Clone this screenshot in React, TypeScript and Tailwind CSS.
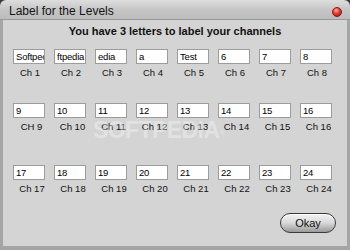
import React from 'react';

const rows: { values: string[]; labels: string[] }[] = [
  {
    values: ['Softpec', 'ftpedia', 'edia', 'a', 'Test', '6', '7', '8'],
    labels: ['Ch 1', 'Ch 2', 'Ch 3', 'Ch 4', 'Ch 5', 'Ch 6', 'Ch 7', 'Ch 8'],
  },
  {
    values: ['9', '10', '11', '12', '13', '14', '15', '16'],
    labels: ['CH 9', 'Ch 10', 'Ch 11', 'Ch 12', 'Ch 13', 'Ch 14', 'Ch 15', 'Ch 16'],
  },
  {
    values: ['17', '18', '19', '20', '21', '22', '23', '24'],
    labels: ['Ch 17', 'Ch 18', 'Ch 19', 'Ch 20', 'Ch 21', 'Ch 22', 'Ch 23', 'Ch 24'],
  },
];

const ChannelRow: React.FC<{ values: string[]; labels: string[]; shift: string }> = ({ values, labels, shift }) => (
  <div className="grid grid-cols-[repeat(8,32px)] gap-x-[9px]">
    {values.map((v, i) => (
      <div key={i} className="flex flex-col">
        <div className="h-[15px] w-[32px] bg-white border border-[#9c9c9c] overflow-hidden whitespace-nowrap pl-[2px] text-[9.5px] leading-[13px] tracking-[-0.2px] text-black">
          {v}
        </div>
        <div className={`mt-[3px] h-[12px] text-center whitespace-nowrap text-[9.5px] leading-[12px] text-[#111] ${shift}`}>
          {labels[i]}
        </div>
      </div>
    ))}
  </div>
);

const App: React.FC = () => {
  return (
    <div className="w-[350px] h-[250px] bg-[#3c3c3c] font-['Liberation_Sans',Arial,sans-serif]">
      <div className="flex flex-col h-full rounded-t-[6px] overflow-hidden">
        {/* title bar */}
        <div className="h-[20px] shrink-0 flex items-center justify-between pl-[9px] pr-[8px] bg-gradient-to-b from-[#dedede] via-[#c6c6c6] to-[#bcbcbc] border-b border-[#9a9a9a]">
          <span className="text-[12px] leading-[14px] text-[#141414] pt-[2px]">Label for the Levels</span>
          <span className="w-[10px] h-[10px] rounded-full border border-[#7a1a1a] bg-[radial-gradient(circle_at_40%_30%,#ffb0a0_0%,#e83a2a_45%,#a01010_100%)] mt-[5px]" />
        </div>

        {/* body */}
        <div className="relative flex-1 flex flex-col bg-[#d4d4d4] border-l-[3px] border-r-[3px] border-b-[4px] border-[#a5a5a5]">
          <div className="mt-[4px] text-center text-[11px] leading-[14px] font-bold text-[#111]">
            You have 3 letters to label your channels
          </div>

          <div className="mt-[11px] pl-[10px]">
            <ChannelRow values={rows[0].values} labels={rows[0].labels} shift="pl-[2px]" />
          </div>
          <div className="mt-[24px] pl-[10px]">
            <ChannelRow values={rows[1].values} labels={rows[1].labels} shift="pl-[5px]" />
          </div>
          <div className="mt-[32px] pl-[10px]">
            <ChannelRow values={rows[2].values} labels={rows[2].labels} shift="pl-[6px]" />
          </div>

          <div className="mt-[18px] flex justify-end pr-[11px]">
            <button className="w-[56px] h-[20px] rounded-full border border-[#3a3a3a] bg-gradient-to-b from-[#f4f4f4] via-[#d8d8d8] to-[#9a9a9a] shadow-[inset_0_1px_0_#ffffff] text-[11px] leading-[18px] text-[#111]">
              Okay
            </button>
          </div>

          {/* watermark */}
          <div className="absolute left-[90px] top-[93px] text-[23px] font-bold tracking-tight text-white/35 pointer-events-none select-none">
            SOFTPEDIA<sup className="text-[7px]">®</sup>
          </div>
        </div>
      </div>
    </div>
  );
};

export default App;
